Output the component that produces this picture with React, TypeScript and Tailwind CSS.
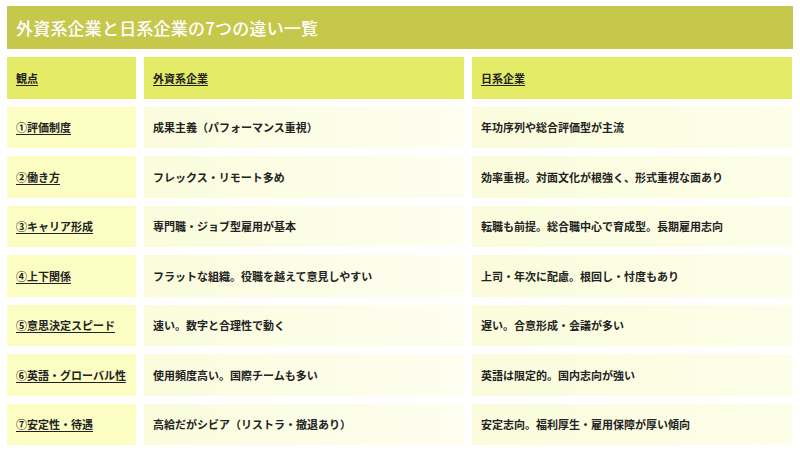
import React from "react";

const rows: [string, string, string][] = [
  ["①評価制度", "成果主義（パフォーマンス重視）", "年功序列や総合評価型が主流"],
  ["②働き方", "フレックス・リモート多め", "効率重視。対面文化が根強く、形式重視な面あり"],
  ["③キャリア形成", "専門職・ジョブ型雇用が基本", "転職も前提。総合職中心で育成型。長期雇用志向"],
  ["④上下関係", "フラットな組織。役職を越えて意見しやすい", "上司・年次に配慮。根回し・忖度もあり"],
  ["⑤意思決定スピード", "速い。数字と合理性で動く", "遅い。合意形成・会議が多い"],
  ["⑥英語・グローバル性", "使用頻度高い。国際チームも多い", "英語は限定的。国内志向が強い"],
  ["⑦安定性・待遇", "高給だがシビア（リストラ・撤退あり）", "安定志向。福利厚生・雇用保障が厚い傾向"],
];

export default function App() {
  return (
    <div
      className="w-[800px] h-[450px] bg-white overflow-hidden pt-[6px] px-[7px]"
      style={{ fontFamily: '"Noto Sans CJK JP", "Noto Sans", sans-serif' }}
    >
      <div className="h-[43px] bg-[#c6c84b] flex items-center pl-[9px] w-[786px]">
        <span className="text-white text-[17px] font-medium tracking-[0.2px]">
          外資系企業と日系企業の7つの違い一覧
        </span>
      </div>
      <div className="mt-[8px] grid grid-cols-[129px_320px_320px] gap-x-[8px] gap-y-[8px] auto-rows-[41.5px] text-[11px] font-bold text-[#222]">
        <div className="bg-[#e4eb66] flex items-center pl-[9px] underline underline-offset-2">観点</div>
        <div className="bg-[#e4eb66] flex items-center pl-[9px] underline underline-offset-2">外資系企業</div>
        <div className="bg-[#e4eb66] flex items-center pl-[9px] underline underline-offset-2">日系企業</div>
        {rows.map((r) => (
          <React.Fragment key={r[0]}>
            <div className="bg-[#fcfdc2] flex items-center pl-[9px] underline underline-offset-2">{r[0]}</div>
            <div className="bg-gradient-to-r from-[#fafcdc] to-[#fefef0] flex items-center pl-[9px]">{r[1]}</div>
            <div className="bg-gradient-to-r from-[#fafcdc] to-[#fdfee8] flex items-center pl-[9px]">{r[2]}</div>
          </React.Fragment>
        ))}
      </div>
    </div>
  );
}
